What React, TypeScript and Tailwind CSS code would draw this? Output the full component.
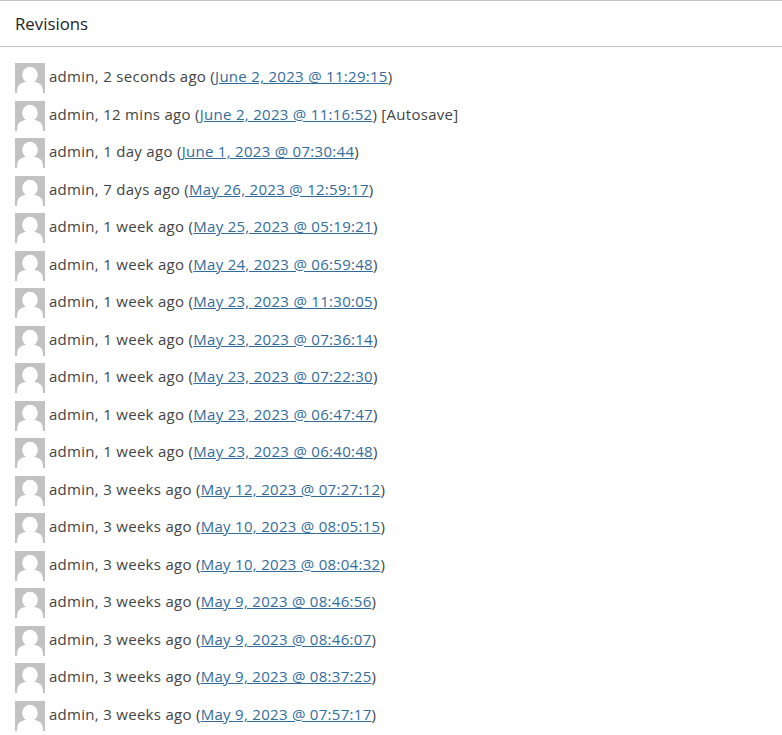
const revisions = [
  { ago: '2 seconds ago', date: 'June 2, 2023 @ 11:29:15' },
  { ago: '12 mins ago', date: 'June 2, 2023 @ 11:16:52', note: '[Autosave]' },
  { ago: '1 day ago', date: 'June 1, 2023 @ 07:30:44' },
  { ago: '7 days ago', date: 'May 26, 2023 @ 12:59:17' },
  { ago: '1 week ago', date: 'May 25, 2023 @ 05:19:21' },
  { ago: '1 week ago', date: 'May 24, 2023 @ 06:59:48' },
  { ago: '1 week ago', date: 'May 23, 2023 @ 11:30:05' },
  { ago: '1 week ago', date: 'May 23, 2023 @ 07:36:14' },
  { ago: '1 week ago', date: 'May 23, 2023 @ 07:22:30' },
  { ago: '1 week ago', date: 'May 23, 2023 @ 06:47:47' },
  { ago: '1 week ago', date: 'May 23, 2023 @ 06:40:48' },
  { ago: '3 weeks ago', date: 'May 12, 2023 @ 07:27:12' },
  { ago: '3 weeks ago', date: 'May 10, 2023 @ 08:05:15' },
  { ago: '3 weeks ago', date: 'May 10, 2023 @ 08:04:32' },
  { ago: '3 weeks ago', date: 'May 9, 2023 @ 08:46:56' },
  { ago: '3 weeks ago', date: 'May 9, 2023 @ 08:46:07' },
  { ago: '3 weeks ago', date: 'May 9, 2023 @ 08:37:25' },
  { ago: '3 weeks ago', date: 'May 9, 2023 @ 07:57:17' },
];

function Avatar() {
  return (
    <svg width="30" height="30" viewBox="0 0 30 30" className="shrink-0">
      <rect width="30" height="30" fill="#c2c2c2" />
      <g className="blur-[0.5px]">
        <ellipse cx="15" cy="12" rx="7.800" ry="8.300" fill="#fff" />
        <path d="M2 32c0-6 .5-9 2.500-10.500 2-1.500 4-2.200 6.500-2.700h8c2.500.5 4.500 1.200 6.500 2.700 2 1.500 2.500 4.500 2.500 10.500z" fill="#fff" />
      </g>
    </svg>
  );
}

export default function App() {
  return (
    <div className="h-[735px] overflow-hidden bg-white font-['Open_Sans','Noto_Sans',sans-serif] text-[15px] tracking-[0.29px] text-[#444]">
      <div className="flex h-[47px] items-center border-y border-[#c3c4c7] px-[15px] pt-[1px]">
        <h2 className="text-[16.800px] font-normal tracking-normal text-[#1d2327]">Revisions</h2>
      </div>
      <ul className="pt-[16px] pl-[15px]">
        {revisions.map((r, i) => (
          <li key={i} className="flex h-[37.500px] items-start">
            <Avatar />
            <span className="ml-1 leading-[27px] whitespace-nowrap">
              admin, {r.ago} (<a href="#" className="text-[#326c9c] underline">{r.date}</a>)
              {r.note ? ` ${r.note}` : ''}
            </span>
          </li>
        ))}
      </ul>
    </div>
  );
}
